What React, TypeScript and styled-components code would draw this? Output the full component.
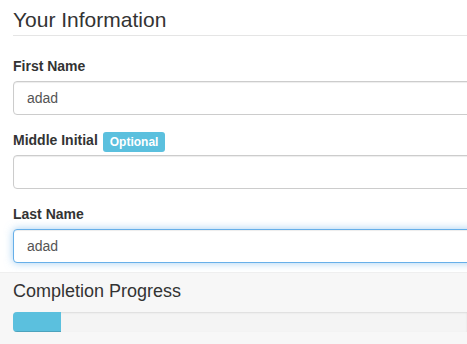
import React from "react";
import styled, { createGlobalStyle, css } from "styled-components";

const Global = createGlobalStyle`
  html, body {
    margin: 0;
    padding: 0;
    overflow: hidden;
    background: #fff;
    font-family: "Liberation Sans", Arial, Helvetica, sans-serif;
    color: #333;
    font-size: 14px;
  }
`;

const Page = styled.div`
  width: 100%;
  overflow: hidden;
`;

const Info = styled.fieldset`
  margin: 0;
  border: 0;
  padding: 8px 0 0 13px;
  width: 600px;
  min-width: 0;
`;

const Legend = styled.div`
  font-size: 21px;
  line-height: 23px;
  color: #333;
  padding-bottom: 4px;
  border-bottom: 1px solid #e5e5e5;
  margin-bottom: 20px;
`;

const Group = styled.div<{ $last?: boolean }>`
  margin-bottom: ${(p) => (p.$last ? "9px" : "15px")};
`;

const Label = styled.label`
  display: flex;
  align-items: flex-start;
  height: 20px;
  font-weight: bold;
  font-size: 14px;
  line-height: 20px;
  margin-bottom: 5px;
  color: #333;
`;

const Badge = styled.span`
  display: inline-block;
  box-sizing: border-box;
  height: 20px;
  margin: 2px 0 0 5px;
  padding: 3px 7px 0;
  font-size: 12px;
  line-height: 14px;
  font-weight: bold;
  color: #fff;
  background: #5bc0de;
  border-radius: 3px;
`;

const Input = styled.input<{ $focused?: boolean }>`
  display: block;
  box-sizing: border-box;
  width: 100%;
  height: 34px;
  padding: 6px 13px;
  font-family: inherit;
  font-size: 14px;
  line-height: 20px;
  color: #555;
  background: #fff;
  border: 1px solid #ccc;
  border-radius: 4px;
  box-shadow: inset 0 1px 1px rgba(0, 0, 0, 0.075);
  outline: none;
  ${(p) =>
    p.$focused &&
    css`
      border-color: #66afe9;
      box-shadow: inset 0 1px 1px rgba(0, 0, 0, 0.075),
        0 0 8px rgba(102, 175, 233, 0.6);
    `}
`;

const ProgressSection = styled.section`
  background: #f7f7f7;
  border-top: 1px solid #efefef;
  padding: 8px 0 20px 13px;
`;

const SectionTitle = styled.div`
  font-size: 18px;
  line-height: 20px;
  color: #333;
  margin-bottom: 11px;
`;

const Track = styled.div`
  height: 20px;
  background: #f4f4f4;
  border-radius: 4px 0 0 4px;
  overflow: hidden;
  box-shadow: inset 0 1px 2px rgba(0, 0, 0, 0.1);
`;

const Bar = styled.div`
  height: 100%;
  background: #5bc0de;
  box-shadow: inset 0 -1px 0 rgba(0, 0, 0, 0.15);
`;

export default function App() {
  return (
    <Page>
      <Global />
      <Info>
        <Legend>Your Information</Legend>
        <Group>
          <Label>First Name</Label>
          <Input defaultValue="adad" />
        </Group>
        <Group>
          <Label>
            Middle Initial<Badge>Optional</Badge>
          </Label>
          <Input defaultValue="" />
        </Group>
        <Group $last>
          <Label>Last Name</Label>
          <Input defaultValue="adad" $focused />
        </Group>
      </Info>
      <ProgressSection>
        <SectionTitle>Completion Progress</SectionTitle>
        <Track>
          <Bar style={{ width: "48px" }} />
        </Track>
      </ProgressSection>
    </Page>
  );
}
